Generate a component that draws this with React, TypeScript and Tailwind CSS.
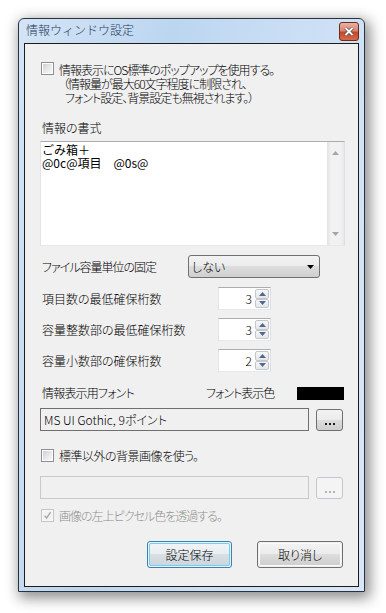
import React from 'react'

const btnFace =
  'bg-[linear-gradient(#f2f2f2_0%,#ebebeb_50%,#dddddd_50%,#cfcfcf_100%)]'

function Check({ checked = false, disabled = false }: { checked?: boolean; disabled?: boolean }) {
  return (
    <span
      className={`flex w-[13px] h-[13px] shrink-0 border p-px ${
        disabled ? 'border-[#c6c6c6] bg-[#f7f7f7]' : 'border-[#8e8f8f] bg-white'
      }`}
    >
      <span
        className={`relative block w-full h-full ${
          disabled
            ? 'bg-[#f3f3f3]'
            : 'bg-[linear-gradient(135deg,#cdd0d4_0%,#e8e9eb_55%,#f7f7f7_100%)]'
        }`}
      >
        {checked && (
          <svg viewBox="0 0 9 9" className="absolute inset-0 w-full h-full">
            <path d="M1.5 4.6 L3.6 7 L7.6 1.2" fill="none" stroke={disabled ? '#a8a8a8' : '#1c2b5e'} strokeWidth="1.4" />
          </svg>
        )}
      </span>
    </span>
  )
}

function Spinner({ value }: { value: string }) {
  return (
    <div className="flex w-[53px] h-[23px] border border-[#abadb3] border-r-[#dbdfe6] border-b-[#e3e9ef] border-l-[#e2e3ea] bg-white">
      <div className="flex-1 pr-[3px] text-right leading-[21px] text-black">{value}</div>
      <div className="flex flex-col w-[14px] py-px mr-px gap-0">
        <div className="flex items-center justify-center h-[10px] border border-[#c3c7cd] rounded-[2px] bg-[linear-gradient(#f7f7f7,#e4e6e8)]">
          <svg width="7" height="4" viewBox="0 0 7 4"><path d="M0 4 L3.5 0 L7 4 Z" fill="#4f6791" /></svg>
        </div>
        <div className="flex items-center justify-center h-[10px] border border-[#c3c7cd] rounded-[2px] bg-[linear-gradient(#f7f7f7,#e4e6e8)]">
          <svg width="7" height="4" viewBox="0 0 7 4"><path d="M0 0 L3.5 4 L7 0 Z" fill="#4f6791" /></svg>
        </div>
      </div>
    </div>
  )
}

function DotsButton({ disabled = false }: { disabled?: boolean }) {
  return (
    <div
      className={`flex items-end justify-center w-[27px] h-[22px] rounded-[3px] border pb-[5px] ${
        disabled ? 'border-[#c4c7ca] bg-[#f4f4f4]' : `border-[#707070] ${btnFace}`
      }`}
    >
      <div className="flex gap-[2px]">
        {[0, 1, 2].map((i) => (
          <span key={i} className={`block w-[2px] h-[2px] ${disabled ? 'bg-[#b4b4b4]' : 'bg-[#1b1b1b]'}`} />
        ))}
      </div>
    </div>
  )
}

export default function App() {
  return (
    <div className="min-h-[613px] bg-white pl-[18px] pt-[18px] text-[12px] font-light text-black font-['Noto_Sans_CJK_JP','Noto_Sans',sans-serif] [font-feature-settings:'palt']">
      {/* Window frame */}
      <div className="flex flex-col w-[347px] h-[574px] border border-[#2a323c] rounded-t-[6px] bg-[linear-gradient(100deg,#d3e4f6_0%,#bcd6f0_35%,#c9def4_60%,#d8e7f7_100%)] shadow-[3px_4px_14px_2px_rgba(0,0,0,0.45)]">
        <div className="flex items-start justify-between h-[24px] pl-[7px] pr-[5px]">
          <span className="mt-[4px] leading-[14px] text-[#1f3a5a] [font-feature-settings:normal]">情報ウィンドウ設定</span>
          <div className="flex items-center justify-center mt-[3px] w-[20px] h-[19px] rounded-[3px] border border-[#6b2a1d] bg-[linear-gradient(#eab1a3_0%,#d98670_45%,#c5482c_55%,#d46a45_100%)]">
            <svg width="10" height="9" viewBox="0 0 10 9">
              <path d="M1.5 1 L8.5 8 M8.5 1 L1.5 8" stroke="#4a4a4a" strokeWidth="3.2" />
              <path d="M1.5 1 L8.5 8 M8.5 1 L1.5 8" stroke="#ffffff" strokeWidth="1.8" />
            </svg>
          </div>
        </div>

        {/* Client area */}
        <div className="flex flex-col flex-1 mx-[5px] mb-[4px] border border-[#1c1c1c] bg-[#f0f0f0] pl-[15px] pr-[13px] pt-[18px]">
          <div className="flex items-start">
            <span className="ml-px">
              <Check />
            </span>
            <div className="ml-[5px] mt-px leading-[14px] tracking-[-1px]">
              <div>情報表示にOS標準のポップアップを使用する。</div>
              <div className="pl-[4px]">（情報量が最大60文字程度に制限され、</div>
              <div className="pl-[6px]">フォント設定、背景設定も無視されます。）</div>
            </div>
          </div>

          <div className="mt-[16px] ml-[2px] leading-[14px]">情報の書式</div>

          <div className="flex mt-[6px] h-[105px] border border-[#abadb3] border-l-[#e2e3ea] border-r-[#dbdfe6] border-b-[#e3e9ef] bg-white">
            <div className="flex-1 pl-px pt-px leading-[13px] whitespace-pre font-normal [font-feature-settings:normal]">{'ごみ箱＋\n@0c@項目　@0s@'}</div>
            <div className="flex flex-col items-center justify-between w-[17px] py-[9px] bg-[linear-gradient(90deg,#e2e2e2_0%,#f2f2f2_25%,#f1f1f1_80%,#e8e8e8_100%)]">
              <svg width="7" height="4" viewBox="0 0 7 4"><path d="M0 4 L3.5 0 L7 4 Z" fill="#a6a6a6" /></svg>
              <svg width="7" height="4" viewBox="0 0 7 4"><path d="M0 0 L3.5 4 L7 0 Z" fill="#a6a6a6" /></svg>
            </div>
          </div>

          <div className="flex items-center mt-[9px] h-[23px]">
            <div className="w-[148px] pl-[2px] tracking-[-1px]">ファイル容量単位の固定</div>
            <div className={`flex items-center justify-between w-[132px] h-[23px] rounded-[3px] border border-[#707070] ${btnFace} pl-[3px] pr-[5px]`}>
              <span>しない</span>
              <svg width="7" height="4" viewBox="0 0 7 4"><path d="M0 0 L7 0 L3.5 4 Z" fill="#000" /></svg>
            </div>
          </div>

          {[
            ['項目数の最低確保桁数', '3'],
            ['容量整数部の最低確保桁数', '3'],
            ['容量小数部の確保桁数', '2'],
          ].map(([label, v], i) => (
            <div key={label} className={`flex items-center h-[23px] ${i === 0 ? 'mt-[9px]' : 'mt-[8px]'}`}>
              <div className="w-[178px] pl-[2px]">{label}</div>
              <Spinner value={v} />
            </div>
          ))}

          <div className="flex items-center mt-[14px] h-[14px]">
            <div className="w-[166px] pl-[2px] tracking-[-0.8px]">情報表示用フォント</div>
            <div className="w-[91px] tracking-[-1px]">フォント表示色</div>
            <div className="w-[47px] h-[13px] bg-black" />
          </div>

          <div className="flex items-center gap-[7px] mt-[8px]">
            <div className="w-[269px] h-[23px] border border-[#6f6f6f] bg-[#f0f0f0] pl-[3px] leading-[21px]">MS UI Gothic, 9ポイント</div>
            <DotsButton />
          </div>

          <div className="flex items-center mt-[18px] h-[13px]">
            <span className="ml-px">
              <Check />
            </span>
            <span className="ml-[5px] tracking-[-0.5px]">標準以外の背景画像を使う。</span>
          </div>

          <div className="flex items-center gap-[7px] mt-[14px]">
            <div className="w-[269px] h-[23px] border border-[#c9c9c9] bg-[#f0f0f0]" />
            <DotsButton disabled />
          </div>

          <div className="flex items-center mt-[10px] h-[13px]">
            <span className="ml-px">
              <Check checked disabled />
            </span>
            <span className="ml-[5px] text-[#8f8f8f] tracking-[-1px]">画像の左上ピクセル色を透過する。</span>
          </div>

          <div className="flex justify-end gap-[25px] mt-[19px] mr-[2px]">
            <div className="w-[85px] h-[27px] rounded-[3px] border border-[#3c7fb1] p-px">
              <div className="flex items-center justify-center h-full rounded-[2px] border border-[#6fd0f5] bg-[linear-gradient(#f1f4f6_0%,#e8edf0_50%,#d9e0e5_50%,#cdd5db_100%)]">
                設定保存
              </div>
            </div>
            <div className="w-[86px] h-[27px] rounded-[3px] border border-[#707070] p-px">
              <div className={`flex items-center justify-center h-full rounded-[2px] border border-[#fafafa] ${btnFace}`}>
                取り消し
              </div>
            </div>
          </div>
        </div>
      </div>
    </div>
  )
}
